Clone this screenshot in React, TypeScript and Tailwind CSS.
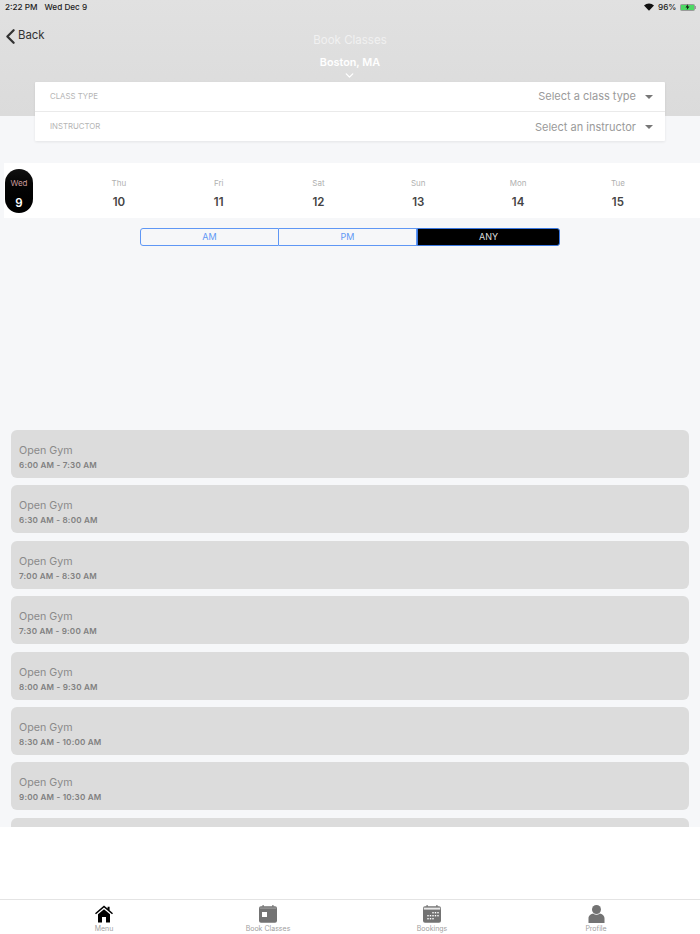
import { ChevronLeft, ChevronDown } from "lucide-react";

const days = [
  { name: "Thu", num: 10 },
  { name: "Fri", num: 11 },
  { name: "Sat", num: 12 },
  { name: "Sun", num: 13 },
  { name: "Mon", num: 14 },
  { name: "Tue", num: 15 },
];

const classes = [
  "6:00 AM - 7:30 AM",
  "6:30 AM - 8:00 AM",
  "7:00 AM - 8:30 AM",
  "7:30 AM - 9:00 AM",
  "8:00 AM - 9:30 AM",
  "8:30 AM - 10:00 AM",
  "9:00 AM - 10:30 AM",
];

function Caret() {
  return <span className="ml-[9px] mr-[3px] h-0 w-0 border-x-[4px] border-t-[4px] border-x-transparent border-t-[#777]" />;
}

function FilterRow({ label, value, last }: { label: string; value: string; last?: boolean }) {
  return (
    <div className={`flex items-center justify-between pl-[15px] pr-[9px] ${last ? "h-[29px] pt-[1px]" : "h-[30px] border-b border-[#eaeaea]"}`}>
      <span className="text-[7.8px] text-[#b5b5b5]">{label}</span>
      <span className="flex items-center text-[11px] text-[#9a9a9a]">
        {value}
        <Caret />
      </span>
    </div>
  );
}

function HomeIcon() {
  return (
    <svg width="18" height="18" viewBox="0 0 18 18" fill="#000">
      <path d="M9 0.5 L12.6 3.6 V1.8 H14.6 V5.3 L18 8.2 L17 9.3 L9 2.6 L1 9.3 L0 8.2 Z" />
      <path d="M3 9.2 L9 4.2 L15 9.2 V17.5 H11 V12 H7 V17.5 H3 Z" />
    </svg>
  );
}

function BookIcon() {
  return (
    <svg width="18" height="18" viewBox="0 0 18 18" fill="#737373">
      <rect x="3.5" y="0" width="1.2" height="3" />
      <rect x="13.3" y="0" width="1.2" height="3" />
      <rect x="0" y="1.2" width="18" height="16.6" rx="2" />
      <rect x="0.8" y="2.6" width="16.4" height="1" fill="#a5a5a5" />
      <rect x="3" y="7" width="5" height="5" fill="#fff" />
    </svg>
  );
}

function BookingsIcon() {
  const dots = [
    [10, 7], [12.5, 7], [15, 7],
    [5, 10], [7.5, 10], [10, 10], [12.5, 10], [15, 10],
    [5, 13], [7.5, 13], [10, 13],
  ];
  return (
    <svg width="18" height="18" viewBox="0 0 18 18" fill="#737373">
      <rect x="3.5" y="0" width="1.2" height="3" />
      <rect x="13.3" y="0" width="1.2" height="3" />
      <rect x="0" y="1.2" width="18" height="16.6" rx="2" />
      <rect x="0.8" y="2.6" width="16.4" height="2" fill="#e8e8e8" />
      {dots.map(([x, y]) => (
        <rect key={`${x}-${y}`} x={x - 0.7} y={y} width="1.4" height="1.4" fill="#fff" />
      ))}
    </svg>
  );
}

function ProfileIcon() {
  return (
    <svg width="17" height="18" viewBox="0 0 17 18" fill="#737373">
      <circle cx="8.5" cy="4.5" r="4.5" />
      <path d="M0.5 18 V13.5 C0.5 10.5 3 9 5.2 8.6 C6.2 9.4 7.2 9.8 8.5 9.8 C9.8 9.8 10.8 9.4 11.8 8.6 C14 9 16.5 10.5 16.5 13.5 V18 Z" />
    </svg>
  );
}

const tabs = [
  { label: "Menu", icon: <HomeIcon /> },
  { label: "Book Classes", icon: <BookIcon /> },
  { label: "Bookings", icon: <BookingsIcon /> },
  { label: "Profile", icon: <ProfileIcon /> },
];

export default function App() {
  return (
    <div className="flex h-[934px] w-[700px] flex-col overflow-hidden bg-white font-['Inter',sans-serif]">
      <div className="h-[116px] shrink-0 bg-gradient-to-b from-[#e1e1e1] to-[#dbdbdb]">
        <div className="flex h-[14px] items-center justify-between pl-[5px] pr-[4px] pt-[1px] text-[8.2px] text-[#222]">
          <span className="font-medium">
            2:22 PM<span className="ml-[7px]">Wed Dec 9</span>
          </span>
          <span className="flex items-center font-medium">
            <svg width="10" height="8" viewBox="0 0 11 8" fill="#111" className="mr-[4px]">
              <path d="M5.5 8 L0 2.4 C3 -0.6 8 -0.6 11 2.4 Z" />
            </svg>
            96%
            <span className="ml-[3px] flex h-[7px] w-[15px] items-center justify-center rounded-[1.5px] border border-[#9a9a9a] bg-[#4cd964]">
              <svg width="5" height="6" viewBox="0 0 5 6" fill="#111">
                <path d="M3 0 L0.5 3.4 H2.2 L1.8 6 L4.5 2.5 H2.7 Z" />
              </svg>
            </span>
            <span className="ml-[0.5px] h-[3px] w-[1px] bg-[#9a9a9a]" />
          </span>
        </div>
        <div className="grid grid-cols-[1fr_auto_1fr] pt-[10px]">
          <div className="flex h-[24px] items-center text-[#333]">
            <ChevronLeft size={25} strokeWidth={2.2} className="-ml-[2px]" />
            <span className="-ml-[5px] text-[11.4px]">Back</span>
          </div>
          <div className="flex flex-col items-center pt-[9px] text-white">
            <span className="text-[11.5px] leading-[14px] text-[#f1f1f1]">Book Classes</span>
            <span className="mt-[9px] text-[10.8px] font-semibold leading-[14px]">Boston, MA</span>
            <ChevronDown size={13} strokeWidth={2.5} className="-mt-[1px]" />
          </div>
          <div />
        </div>
      </div>

      <div className="flex flex-1 flex-col bg-[#f6f7f9]">
        <div className="mx-[35px] -mt-[34px] rounded-[1px] bg-white shadow-[0_1px_3px_rgba(0,0,0,0.08)]">
          <FilterRow label="CLASS TYPE" value="Select a class type" />
          <FilterRow label="INSTRUCTOR" value="Select an instructor" last />
        </div>

        <div className="ml-[4px] mt-[22px] flex h-[55px] items-center bg-white">
          <div className="ml-[1px] flex h-[44px] w-[28px] shrink-0 flex-col items-center justify-between rounded-[14px] bg-gradient-to-b from-[#111] to-black py-[9px] pb-[3px]">
            <span className="text-[8px] leading-[10px] text-[#c99a9a]">Wed</span>
            <span className="text-[11.5px] font-semibold leading-[14px] text-white">9</span>
          </div>
          <div className="ml-[36px] flex pt-[6px]">
            {days.map((d) => (
              <div key={d.num} className="flex w-[99.8px] flex-col items-center">
                <span className="text-[8px] leading-[10px] text-[#b0b0b0]">{d.name}</span>
                <span className="mt-[7px] text-[11.5px] font-semibold leading-[14px] text-[#444]">{d.num}</span>
              </div>
            ))}
          </div>
        </div>

        <div className="ml-[140px] mt-[10px] flex h-[18px] w-[420px] text-[9px]">
          <div className="flex w-[139px] items-center justify-center rounded-l-[3px] border border-[#5f97f5] text-[#5f97f5]">AM</div>
          <div className="flex w-[138px] items-center justify-center border-y border-r border-[#5f97f5] text-[#5f97f5]">PM</div>
          <div className="flex flex-1 items-center justify-center rounded-r-[3px] border border-[#3b78e0] bg-black text-[#ddd]">ANY</div>
        </div>

        <div className="mt-[184px] flex h-[397px] flex-col gap-[7.4px] overflow-hidden px-[11px]">
          {classes.map((c) => (
            <div key={c} className="h-[48px] shrink-0 rounded-[6px] bg-[#dcdcdc] pl-[8px] pt-[14px]">
              <div className="text-[10.7px] leading-[14px] text-[#8a8a8a]">Open Gym</div>
              <div className="text-[8.1px] font-semibold leading-[14px] tracking-[0.2px] text-[#808080]">{c}</div>
            </div>
          ))}
          <div className="h-[48px] shrink-0 rounded-[6px] bg-[#dcdcdc]" />
        </div>

        <div className="flex-1 bg-white" />

        <div className="grid h-[35px] shrink-0 grid-cols-4 border-t border-[#e4e4e4] bg-white px-[22px]">
          {tabs.map((t) => (
            <div key={t.label} className="flex flex-col items-center pt-[5px]">
              {t.icon}
              <span className="mt-[1px] text-[7px] leading-[9px] text-[#a0a0a0]">{t.label}</span>
            </div>
          ))}
        </div>
      </div>
    </div>
  );
}
